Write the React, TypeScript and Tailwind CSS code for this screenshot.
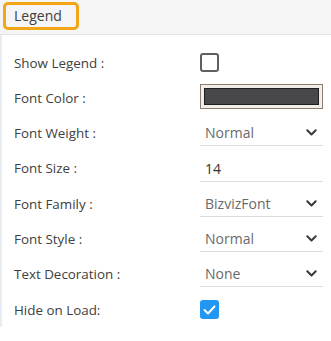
import * as React from "react";

function Chevron() {
  return (
    <svg width="11" height="7" viewBox="0 0 11 7" fill="none" className="shrink-0">
      <path d="M1.3 1.3 L5.5 5.5 L9.7 1.3" stroke="#3a3a3a" strokeWidth="2" strokeLinecap="round" strokeLinejoin="round" />
    </svg>
  );
}

function Row({ label, children }: { label: string; children: React.ReactNode }) {
  return (
    <div className="flex h-[35.3px] items-center">
      <div className="w-[186px] text-[13.4px] text-[#404040]">{label}</div>
      <div className="flex-1">{children}</div>
    </div>
  );
}

function SelectBox({ value, dark }: { value: string; dark?: boolean }) {
  return (
    <div className="flex h-[26px] items-center justify-between border-b border-[#dcdcdc] pl-[5px] pr-[6px]">
      <span className={dark ? "text-[14px] text-[#333333]" : "text-[14px] text-[#6a6a6a]"}>{value}</span>
      {!dark && <Chevron />}
    </div>
  );
}

export default function App() {
  return (
    <div className="h-[341px] w-[331px] bg-white font-['Open_Sans','Noto_Sans',sans-serif]">
      {/* Header */}
      <div className="flex h-[35px] items-start border-b border-[#e2e2e2] bg-[#f5f5f5] pl-[3px] pt-[2px]">
        <div className="flex h-[28px] w-[76px] items-center rounded-[5px] border-[3px] border-[#f2a516] pb-[2px] pl-[8px] text-[14px] text-[#404040]">
          Legend
        </div>
      </div>

      {/* Body */}
      <div className="border-l-2 border-[#e6edf3] pl-[12px] pr-[8px] pt-[10px]">
        <Row label="Show Legend :">
          <div className="h-[19px] w-[19px] rounded-[3px] border-2 border-[#5f5f5f] bg-white" />
        </Row>
        <Row label="Font Color :">
          <div className="mb-[3px] h-[25px] border border-[#8c7d70] bg-[#f1eeea] p-[3px]">
            <div className="h-full border border-[#1e1e1e] bg-[#48484c]" />
          </div>
        </Row>
        <Row label="Font Weight :">
          <SelectBox value="Normal" />
        </Row>
        <Row label="Font Size :">
          <SelectBox value="14" dark />
        </Row>
        <Row label="Font Family :">
          <SelectBox value="BizvizFont" />
        </Row>
        <Row label="Font Style :">
          <SelectBox value="Normal" />
        </Row>
        <Row label="Text Decoration :">
          <SelectBox value="None" />
        </Row>
        <Row label="Hide on Load:">
          <div className="flex h-[19px] w-[19px] items-center justify-center rounded-[3px] bg-[#2196f3]">
            <svg width="13" height="10" viewBox="0 0 13 10" fill="none">
              <path d="M1.5 5 L5 8.5 L11.5 1.5" stroke="white" strokeWidth="2" strokeLinecap="round" strokeLinejoin="round" />
            </svg>
          </div>
        </Row>
      </div>
    </div>
  );
}
